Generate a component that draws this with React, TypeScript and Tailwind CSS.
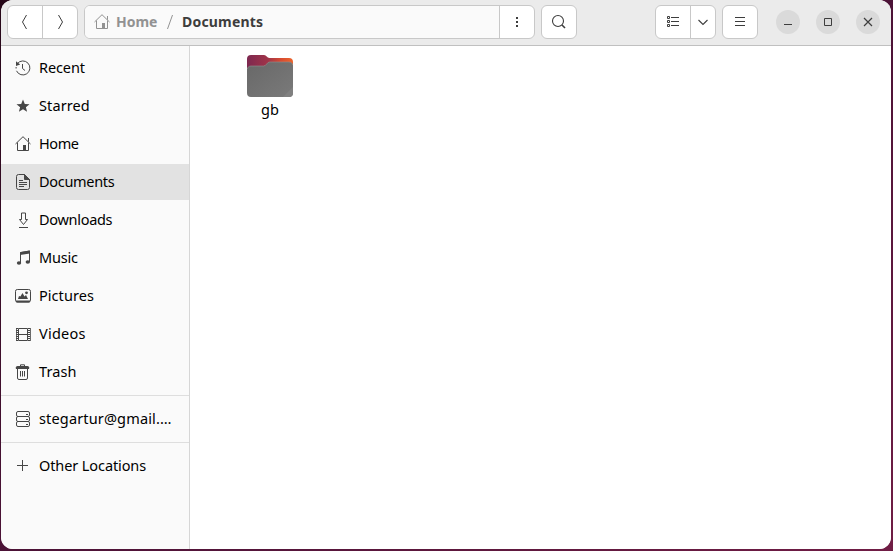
import type { ReactNode } from "react";

type IconName =
  | "recent" | "star" | "home" | "document" | "download" | "music"
  | "picture" | "video" | "trash" | "server" | "plus";

const glyphs: Record<IconName, ReactNode> = {
  recent: (
    <>
      <path d="M2.4 3.6A7 7 0 1 1 1.5 10.8M1.1 8.5V7" />
      <path d="M1 1.2 5.2 4.4 1 6Z" fill="currentColor" stroke="none" />
      <path d="M7.5 4v4.5l2.5 2" />
    </>
  ),
  star: <path d="m8 1.5 1.8 4.4 4.7.3-3.600 3 1.200 4.600L8 11.300l-4.100 2.500 1.200-4.600-3.600-3 4.700-.3Z" fill="currentColor" stroke="none" />,
  home: (
    <>
      <path d="m.5 8 7.500-7.300L15.500 8M2.500 6.500v8h11v-8M13.500 2v3.800" />
      <path d="M8 9h3v6H8z" fill="currentColor" stroke="none" />
    </>
  ),
  document: (
    <>
      <path d="M3.5.5h6l5 5v8a2 2 0 0 1-2 2h-9a2 2 0 0 1-2-2v-11a2 2 0 0 1 2-2Z" />
      <path d="M9.5.5v5h5Z" fill="currentColor" />
      <path d="M4 6.5h4M4 8.5h8M4 10.5h8M4 12.5h5" />
    </>
  ),
  download: <path d="M6.5 1v6.500h-2l4 5 4-5h-2V1h-4ZM4 15.500h9" />,
  music: (
    <>
      <path d="M5.5 13V2.500l9-1.500v11" />
      <path d="M5 2.200 15 .5v3L5 5Z" fill="currentColor" stroke="none" />
      <ellipse cx="4" cy="13" rx="2.200" ry="1.800" fill="currentColor" stroke="none" />
      <ellipse cx="12.800" cy="12" rx="2.200" ry="1.800" fill="currentColor" stroke="none" />
    </>
  ),
  picture: (
    <>
      <rect x=".5" y="1.500" width="15" height="12.500" rx="1.800" />
      <path d="M1 12.500h14v1a1 1 0 0 1-1 1H2a1 1 0 0 1-1-1ZM3 11l1-3 1.400.6L7.500 5l2 3.500L11 7l2 4Z" fill="currentColor" stroke="none" />
      <circle cx="11.500" cy="4.800" r="1.400" fill="currentColor" stroke="none" />
    </>
  ),
  video: (
    <>
      <path d="M3.500 2.500h9v12h-9zM3.500 8.500h9" />
      <path d="M2 2v13M14 2v13" strokeWidth="2" strokeDasharray="1 1" />
      <path d="M1.500 2v13M15.500 2v13" strokeWidth=".8" />
    </>
  ),
  trash: (
    <>
      <path d="M2.500 5v9a1.500 1.500 0 0 0 1.500 1.500h7a1.500 1.500 0 0 0 1.500-1.500V5M5.500 7v5.500M7.500 7v5.500M9.500 7v5.500M5.500 2V.8h4V2" />
      <path d="M3 2h9a2 2 0 0 1 2 3H1a2 2 0 0 1 2-3Z" fill="currentColor" stroke="none" />
    </>
  ),
  server: (
    <>
      <rect x="1.500" y=".5" width="13" height="5" rx="1.500" />
      <rect x="1.500" y="5.500" width="13" height="5" rx="1.500" />
      <rect x="1.500" y="10.500" width="13" height="5" rx="1.500" />
      <path d="M11 3.500h2M11 8.500h2M11 13.500h2" />
    </>
  ),
  plus: <path d="M7.500 2v11M2 7.500h11" />,
};

function Icon({ name }: { name: IconName }) {
  return (
    <svg className="size-4 shrink-0" viewBox="0 0 16 16" fill="none" stroke="currentColor" strokeWidth="1">
      {glyphs[name]}
    </svg>
  );
}

function Place({ icon, label, spacing, selected = false }: { icon: IconName; label: string; spacing: string; selected?: boolean }) {
  return (
    <div className={`flex h-9 shrink-0 items-center gap-2 pl-3.5 text-[#464646] ${selected ? "bg-[#e2e2e2]" : ""}`}>
      <Icon name={icon} />
      <span className={`mb-0.5 whitespace-nowrap text-[14.5px] leading-5 text-black ${spacing}`}>{label}</span>
    </div>
  );
}

const places: { icon: IconName; label: string; spacing: string; selected?: boolean }[] = [
  { icon: "recent", label: "Recent", spacing: "tracking-[-0.1px]" },
  { icon: "star", label: "Starred", spacing: "tracking-[0.1px]" },
  { icon: "home", label: "Home", spacing: "tracking-[-0.4px]" },
  { icon: "document", label: "Documents", spacing: "tracking-[-0.3px]", selected: true },
  { icon: "download", label: "Downloads", spacing: "tracking-[-0.3px]" },
  { icon: "music", label: "Music", spacing: "tracking-[-0.2px]" },
  { icon: "picture", label: "Pictures", spacing: "tracking-[0.05px]" },
  { icon: "video", label: "Videos", spacing: "tracking-[0.25px]" },
  { icon: "trash", label: "Trash", spacing: "tracking-[0.1px]" },
];

const box = "flex h-[34px] shrink-0 overflow-hidden rounded-md border border-[#c8c8c8] bg-white";
const cell = "flex items-center justify-center";

function Stroke({ d, w = "1" }: { d: string; w?: string }) {
  return (
    <svg className="size-4" viewBox="0 0 16 16" fill="none" stroke="currentColor" strokeWidth={w}>
      <path d={d} />
    </svg>
  );
}

function WindowButton({ d, w }: { d: string; w?: string }) {
  return (
    <button className="flex size-6 items-center justify-center rounded-full bg-[#dadada]">
      <Stroke d={d} w={w} />
    </button>
  );
}

function Header() {
  return (
    <header className="flex h-[46px] shrink-0 items-start border-b border-[#c0c0c0] bg-[#ebebeb] pt-[5px] pl-1.5 text-[#3d3d3d]">
      <div className={`${box} w-[71px]`}>
        <button className={`${cell} w-[34px]`}><Stroke d="M9.500 1 5.500 8l4 7" /></button>
        <button className={`${cell} flex-1 border-l border-[#c8c8c8]`}><Stroke d="m6.500 1 4 7-4 7" /></button>
      </div>
      <div className={`${box} ml-1.5 w-[451px]`}>
        <div className="flex flex-1 items-center bg-[#fafafa] pl-[9px] text-[14px] leading-5 font-bold">
          <span className="flex text-[#929292]"><Icon name="home" /></span>
          <span className="ml-1.5 w-[51px] tracking-[0px] text-[#929292]">Home</span>
          <span className="w-[15px] font-normal text-[#929292]">
            <svg className="h-4 w-1.5" viewBox="0 0 6 16" stroke="currentColor"><path d="M5.500 1 .5 15" /></svg>
          </span>
          <span className="tracking-[0.2px]">Documents</span>
        </div>
        <button className={`${cell} w-[35px] border-l border-[#c8c8c8]`}>
          <svg className="size-4" viewBox="0 0 16 16" fill="currentColor">
            <path d="M7 3h2v2H7zM7 7h2v2H7zM7 11h2v2H7z" />
          </svg>
        </button>
      </div>
      <button className={`${box} ${cell} ml-1.5 w-9`}>
        <svg className="size-4" viewBox="0 0 16 16" fill="none" stroke="currentColor" strokeWidth="1.1">
          <circle cx="7" cy="7" r="5.500" /><path d="m11 11 3 3" strokeWidth="1.600" />
        </svg>
      </button>
      <div className={`${box} ml-[78px] w-[61px]`}>
        <button className={`${cell} w-[34px]`}>
          <svg className="size-4" viewBox="0 0 16 16" fill="none" stroke="currentColor">
            <path d="M2.500 2.500h2v2h-2zM2.500 6.500h2v2h-2zM2.500 10.500h2v2h-2zM6 3.500h8M6 7.500h8M6 11.500h8" />
          </svg>
        </button>
        <button className={`${cell} flex-1 border-l border-[#c8c8c8]`}><Stroke d="m3.500 6 4.500 4.500L12.500 6" w="1.100" /></button>
      </div>
      <button className={`${box} ${cell} ml-1.5 w-9`}><Stroke d="M3 3.500h10M3 7.500h10M3 11.500h10" /></button>
      <div className="mt-[5px] ml-[18px] flex gap-4">
        <WindowButton d="M4 10.500h8" />
        <WindowButton d="M4.500 4.500h7v7h-7z" />
        <WindowButton d="m4 4 8 8M12 4l-8 8" w="1.200" />
      </div>
    </header>
  );
}

function Folder() {
  return (
    <svg className="h-11 w-12" viewBox="0 0 48 44">
      <defs>
        <linearGradient id="back" x1="0" x2="1">
          <stop offset="0" stopColor="#7d2850" />
          <stop offset=".45" stopColor="#a03449" />
          <stop offset=".75" stopColor="#d84c30" />
          <stop offset="1" stopColor="#ec652c" />
        </linearGradient>
        <linearGradient id="front" x1="0" x2="1" y1="0" y2="1">
          <stop offset="0" stopColor="#686868" />
          <stop offset="1" stopColor="#7a7a7a" />
        </linearGradient>
      </defs>
      <path d="M5 1h13c2.500 0 3 3 5.500 3H43a4 4 0 0 1 4 4v10H1V5a4 4 0 0 1 4-4Z" fill="url(#back)" />
      <path d="M5 12h12.500c3 0 3.500-4 6-4H43a4 4 0 0 1 4 4v27a4 4 0 0 1-4 4H5a4 4 0 0 1-4-4V16a4 4 0 0 1 4-4Z" fill="url(#front)" />
      <path d="M1.300 15c.4-1.800 1.700-3 3.700-3h12.500c3 0 3.500-4 6-4H43c2 0 3.300 1.200 3.700 3" fill="none" stroke="#929292" strokeWidth=".6" />
      <path d="M47 33v6a4 4 0 0 1-4 4h-6Z" fill="#808080" />
    </svg>
  );
}

export default function App() {
  return (
    <div className="h-[551px] w-[893px] overflow-hidden bg-linear-to-br from-[#260718] via-[#4b1236] to-[#701d45] pr-0.5 pb-0.5 pl-px font-['Noto_Sans',sans-serif]">
      <div className="flex h-full flex-col overflow-hidden rounded-xl bg-white">
        <Header />
        <div className="flex min-h-0 flex-1">
          <aside className="flex w-[189px] shrink-0 flex-col border-r border-[#d6d6d6] bg-[#fafafa] pt-1">
            <nav className="flex flex-col gap-0.5">
              {places.map((place) => <Place key={place.label} {...place} />)}
            </nav>
            <div className="my-[5px] h-px shrink-0 bg-[#dedede]" />
            <Place icon="server" label="stegartur@gmail.…" spacing="tracking-[0.15px]" />
            <div className="my-[5px] h-px shrink-0 bg-[#dedede]" />
            <Place icon="plus" label="Other Locations" spacing="tracking-[-0.1px]" />
          </aside>
          <main className="flex-1 bg-white pt-2 pl-14">
            <div className="flex w-12 flex-col items-center">
              <Folder />
              <span className="mt-px text-[14.5px] leading-5 text-black">gb</span>
            </div>
          </main>
        </div>
      </div>
    </div>
  );
}
